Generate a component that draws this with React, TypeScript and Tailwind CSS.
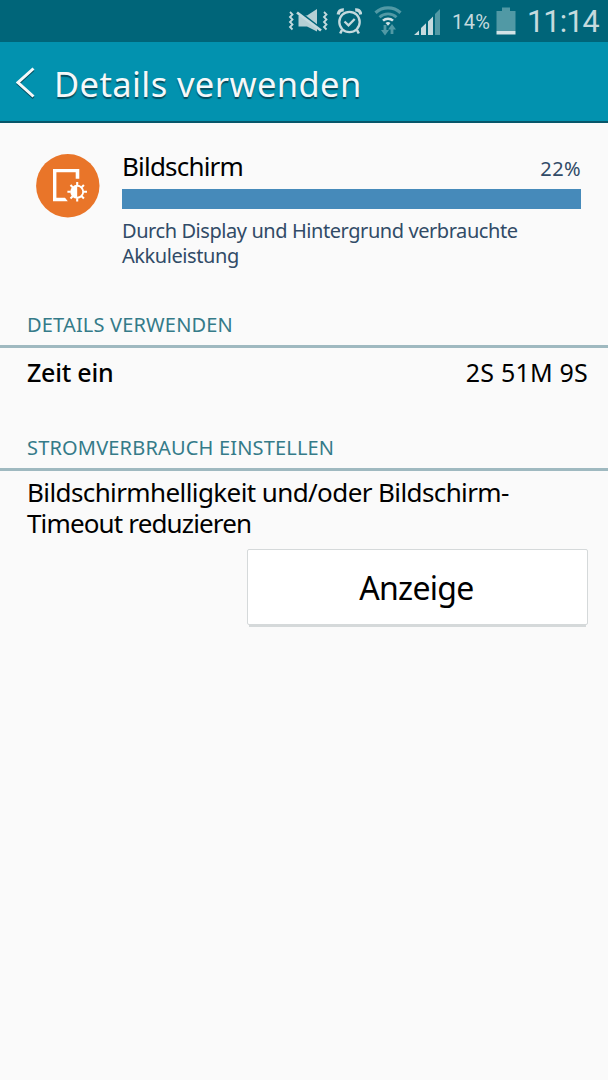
import React from 'react';

const MuteIcon = () => (
  <svg width="40" height="26" viewBox="0 0 40 26" fill="none" className="shrink-0">
    <path d="M2 4l2.500 2.500L2 9l2.500 2.500L2 14l2.500 2.500L2 19l2.500 2.500" stroke="#c5dade" strokeWidth="1.800" />
    <path d="M36 4l2.500 2.500L36 9l2.500 2.500L36 14l2.500 2.500L36 19l2.500 2.500" stroke="#c5dade" strokeWidth="1.800" />
    <path d="M10.500 7.500H19L29 1v22.500L26 22l-7-3.500h-8.500z" fill="#b5d0d5" />
    <path d="M7.500 1.500L34.500 22.500" stroke="#006579" strokeWidth="3" />
    <path d="M9 4.500L33 22.500" stroke="#c5dade" strokeWidth="2.800" />
  </svg>
);

const AlarmIcon = () => (
  <svg width="26" height="28" viewBox="0 0 26 28" fill="none" stroke="#c5dade" className="shrink-0">
    <circle cx="13.500" cy="15" r="10.200" strokeWidth="2.300" />
    <path d="M8.500 14.500l4 3.800 6.200-6.300" strokeWidth="2.300" />
    <path d="M6 23L4.200 26.500M21 23l1.800 3.500" strokeWidth="2.600" />
    <path d="M2.200 7.500C2.600 4.500 4.800 2.700 7.800 2.900M24.800 7.500C24.400 4.500 22.200 2.700 19.200 2.900" strokeWidth="3.200" />
  </svg>
);

const WifiIcon = () => (
  <svg width="28" height="32" viewBox="0 0 28 32" fill="none" className="shrink-0">
    <path d="M1.500 7.800a18.500 18.500 0 0 1 25 0" stroke="#5199a5" strokeWidth="3.200" />
    <path d="M5.500 12.200a12.500 12.500 0 0 1 17 0" stroke="#5199a5" strokeWidth="2.800" />
    <path d="M9 15.600a7.500 7.500 0 0 1 10 0" stroke="#d2e3e6" strokeWidth="2.600" />
    <path d="M11.500 18a4 4 0 0 1 5 0L14 20.800z" fill="#d2e3e6" />
    <path d="M11 20v7M18 29v-7" stroke="#5199a5" strokeWidth="2.800" />
    <path d="M7 25h8l-4 5.500zM14 24.500h8L18 19z" fill="#5199a5" />
  </svg>
);

const SignalIcon = () => (
  <svg width="28" height="28" viewBox="0 0 28 28" className="shrink-0">
    <path d="M0 27l5-4.500V27zM7 20l5-4.800V27H7zM14 13.500l5-5V27h-5z" fill="#c5dade" />
    <path d="M21 6l5-5v26h-5z" fill="#5199a5" />
  </svg>
);

const BatteryIcon = () => (
  <svg width="20" height="28" viewBox="0 0 20 28" className="shrink-0">
    <path d="M6 0.500h8V4h5.500v20H.5V4H6z" fill="#5199a5" />
    <path d="M.5 24h19v3.500H.5z" fill="#d2e3e6" />
  </svg>
);

const DisplayIcon = () => (
  <svg width="64" height="64" viewBox="0 0 64 64" fill="none" className="shrink-0">
    <circle cx="31.800" cy="31.700" r="31.700" fill="#e97529" />
    <path d="M17 15h26.300v9.800h-3.600V18.200H20.400v25.600H29l2.800 3.400H17z" fill="#fff" />
    <circle cx="41.200" cy="37.800" r="6" stroke="#fff" strokeWidth="1.900" />
    <path d="M41.200 31.800a6 6 0 0 0 0 12z" fill="#fff" />
    <path
      d="M41.200 28v3.300M41.200 44.300v3.300M31.400 37.800h3.300M47.700 37.800h3.300M34.500 31.100l2.200 2.200M45.700 42.300l2.200 2.200M34.500 44.500l2.200-2.200M45.700 33.300l2.200-2.200"
      stroke="#fff"
      strokeWidth="2.100"
    />
  </svg>
);

const StatusBar = () => (
  <div className="flex h-[42px] items-start bg-[#006579] pl-[288px] font-[Roboto,sans-serif] text-[#c5dade]">
    <div className="mt-[8px]"><MuteIcon /></div>
    <div className="mt-[7px] ml-[8px]"><AlarmIcon /></div>
    <div className="mt-[5px] ml-[12px]"><WifiIcon /></div>
    <div className="mt-[8px] ml-[12px]"><SignalIcon /></div>
    <span className="mt-[10px] ml-[10px] w-[40px] text-[20px] leading-[24px] tracking-[0.4px] whitespace-nowrap">14%</span>
    <div className="mt-[7px] ml-[4px]"><BatteryIcon /></div>
    <span className="mt-[4px] ml-[11px] text-[30.5px] leading-[36px] tracking-[-0.8px] whitespace-nowrap">11:14</span>
  </div>
);

const Header = () => (
  <header className="flex h-[81px] items-center border-b-2 border-[#07566a] bg-[#0292af] text-[#f5f8f9]">
    <svg width="20" height="32" viewBox="0 0 20 32" fill="none" className="mt-[3px] ml-[16px] shrink-0">
      <path d="M17.500 3L2 17l15.500 14" stroke="#064d5e" strokeWidth="2.500" />
      <path d="M17.500 1.500L2 15.500l15.500 14" stroke="#f5f8f9" strokeWidth="3" />
    </svg>
    <h1 className="mt-[4px] ml-[18px] text-[34.5px] leading-[44px] tracking-[0.4px] whitespace-nowrap [text-shadow:0_1.500px_1px_#064d5e]">
      Details verwenden
    </h1>
  </header>
);

const SectionTitle = ({ children }: { children: React.ReactNode }) => (
  <h2 className="h-[36px] border-b-[3px] border-[#9fb9c0] pl-[27px] text-[20px] leading-[26px] tracking-[0.17px] whitespace-nowrap text-[#357b89]">
    {children}
  </h2>
);

export default function App() {
  return (
    <div className="min-h-[1080px] w-[608px] overflow-hidden bg-[#fafafa] font-['Noto_Sans',sans-serif] text-black">
      <StatusBar />
      <Header />

      <section className="flex h-[189px] pt-[31px] pr-[27px] pl-[36px]">
        <DisplayIcon />
        <div className="ml-[22px] flex-1">
          <div className="flex h-[35px] items-start justify-between">
            <span className="-mt-[6px] text-[26px] leading-[36px] tracking-[-0.8px]">Bildschirm</span>
            <span className="text-[20px] leading-[30px] tracking-[0.4px] text-[#314b67]">22%</span>
          </div>
          <div className="h-[20px] bg-[#468aba]" />
          <p className="mt-[9px] text-[20px] leading-[25px] tracking-[-0.43px] whitespace-nowrap text-[#314b67]">
            Durch Display und Hintergrund verbrauchte
            <br />
            Akkuleistung
          </p>
        </div>
      </section>

      <SectionTitle>DETAILS VERWENDEN</SectionTitle>
      <div className="flex h-[87px] justify-between pt-[6px] pr-[20px] pl-[27px] text-[25px] leading-[36px]">
        <span className="font-medium tracking-[-0.25px]">Zeit ein</span>
        <span className="tracking-[0.2px]">2S 51M 9S</span>
      </div>

      <SectionTitle>STROMVERBRAUCH EINSTELLEN</SectionTitle>
      <p className="mt-[6px] flex flex-col pl-[27px] text-[26px] leading-[31px] whitespace-nowrap">
        <span className="tracking-[-0.6px]">Bildschirmhelligkeit und/oder Bildschirm-</span>
        <span className="tracking-[-0.85px]">Timeout reduzieren</span>
      </p>
      <div className="mt-[10px] flex justify-end pr-[20px]">
        <button className="h-[76px] w-[341px] rounded-[2px] border border-[#d5d9da] bg-white pt-[2px] pr-[2px] text-[32px] tracking-[-0.7px] shadow-[0_4px_0_-2px_#d5d9da]">
          Anzeige
        </button>
      </div>
    </div>
  );
}
